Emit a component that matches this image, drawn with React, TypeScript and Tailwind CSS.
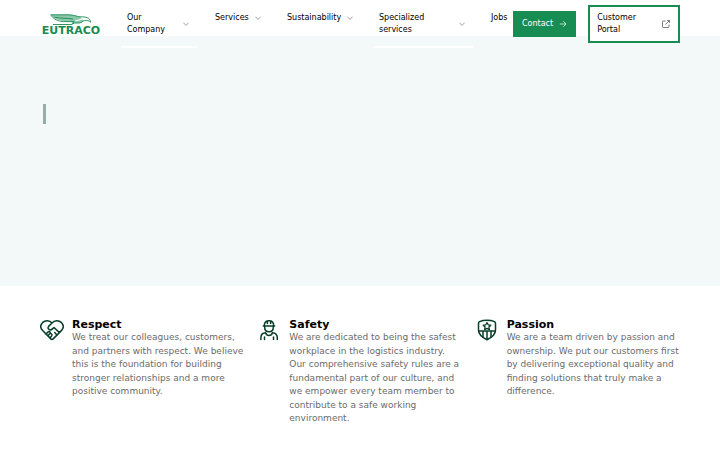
import React from "react";

type NavEntry = { label: string; width: string; menu: boolean };

const navEntries: NavEntry[] = [
  { label: "Our Company", width: "w-19", menu: true },
  { label: "Services", width: "w-15", menu: true },
  { label: "Sustainability", width: "w-20", menu: true },
  { label: "Specialized services", width: "w-25", menu: true },
  { label: "Jobs", width: "w-7", menu: false },
];

function Logo() {
  return (
    <svg viewBox="0 0 61 22" className="h-[22px] w-[61px]" role="img" aria-label="Eutraco">
      <path fill="#8cc7aa" d="M11 .8H29C34 .8 36 2.300 40 2.700L44 6.500L40 9H34L30 7.700C24 7.800 14 6 11 .8Z" />
      <g fill="none" stroke="#178c52" strokeWidth=".9" strokeLinejoin="round">
        <path d="M10.500.8H28C34 .8 36 2.400 40 2.800C46 2.700 50.300 3.600 50.600 8.200C49 6.400 47 6.500 44.500 6.600C42.500 7 41.500 9 39.500 9H34.500L31.500 10.500H13" />
        <path d="M11 1.200C13 4.800 18 8 27 7.600H34L31.500 10.500M14.500 3.200C21 4.500 27 4.100 33 5" />
      </g>
      <path d="M35.500 6.600C39 6.600 40.500 4.600 45 4.700" fill="none" stroke="#ffffff" strokeWidth="1.200" />
      <text x="31" y="20" textAnchor="middle" fontSize="11" fontWeight="700" fill="#178c52" fontFamily="'DejaVu Sans', sans-serif">
        EUTRACO
      </text>
    </svg>
  );
}

function Chevron() {
  return (
    <svg viewBox="0 0 6 6" className="size-1.5 shrink-0" fill="none" stroke="#777" strokeWidth=".7" aria-hidden="true">
      <path d="M.3 1.700 3 4.400 5.700 1.700" />
    </svg>
  );
}

function HandshakeHeart() {
  return (
    <svg viewBox="0 0 24 24" className="size-6" fill="none" stroke="#083d27" strokeWidth="1.500" strokeLinecap="round" strokeLinejoin="round" aria-hidden="true">
      <path d="M12 5C9.500 2 5.200 2 2.700 4.400C.3 6.900.3 10.200 2.600 12.600L10.800 20.900C11.500 21.600 12.500 21.600 13.200 20.900L21.400 12.600C23.700 10.200 23.700 6.900 21.300 4.400C18.800 2 14.500 2 12 5L8.600 8.400C7.800 9.300 7.900 10.500 8.700 11.200C9.900 12.200 11.500 11.900 12.500 10.900L14 9.500L19.400 14.600" />
      <path d="M14.700 14.600 16.700 16.700M6 16 8.200 13.900C9.400 12.900 10.800 14.300 9.900 15.500L8.400 17.200M10 15.500C11.500 15.300 12.500 16.700 11.600 17.900L10.500 19.200" />
    </svg>
  );
}

function Worker() {
  return (
    <svg viewBox="0 0 24 24" className="size-6" fill="none" stroke="#083d27" strokeWidth="1.500" strokeLinecap="round" strokeLinejoin="round" aria-hidden="true">
      <path d="M6.300 8H17.700M7.300 7.800C7.300 4.600 9.200 2.700 12 2.700S16.700 4.600 16.700 7.800M10.400 3.200V5.500M13.600 3.200V5.500" />
      <path d="M7.700 8.500V9.500C7.700 12 9.500 13.700 12 13.700S16.300 12 16.300 9.500V8.500" />
      <path d="M3.900 21.400V19.700C3.900 16.700 5.600 14.900 8.600 14.700C9.200 16.600 10.300 17.400 12 17.400S14.800 16.600 15.400 14.700C18.400 14.900 20.300 16.700 20.300 19.700V21.400M7.500 21.400V18.900M16.500 21.400V18.900" />
    </svg>
  );
}

function Shield() {
  return (
    <svg viewBox="0 0 24 24" className="size-6" fill="none" stroke="#083d27" strokeWidth="1.500" strokeLinecap="round" strokeLinejoin="round" aria-hidden="true">
      <path d="M12 2.200C9.500 2.200 6.500 2.700 4.500 3.600C3.800 4 3.500 4.500 3.500 5.200V12C3.500 16.500 7 19.300 12 21.700C17 19.300 20.500 16.500 20.500 12V5.200C20.500 4.500 20.200 4 19.500 3.600C17.500 2.700 14.500 2.200 12 2.200Z" />
      <path strokeWidth="1.300" d="m12 4.500 1.200 2.300 2.600.4-1.900 1.800.5 2.600L12 10.400 9.600 11.600l.5-2.600-1.900-1.800 2.600-.4Z" />
      <path d="M3.700 13H20.300M8 13V19M12 13V21.300M16 13V19" />
    </svg>
  );
}

const values = [
  {
    title: "Respect",
    icon: <HandshakeHeart />,
    text: "We treat our colleagues, customers, and partners with respect. We believe this is the foundation for building stronger relationships and a more positive community.",
  },
  {
    title: "Safety",
    icon: <Worker />,
    text: "We are dedicated to being the safest workplace in the logistics industry. Our comprehensive safety rules are a fundamental part of our culture, and we empower every team member to contribute to a safe working environment.",
  },
  {
    title: "Passion",
    icon: <Shield />,
    text: "We are a team driven by passion and ownership. We put our customers first by delivering exceptional quality and finding solutions that truly make a difference.",
  },
];

export default function App() {
  return (
    <div className="bg-white font-['DejaVu_Sans',sans-serif] text-black">
      <header className="flex h-9 items-start bg-white px-10 text-[8px] leading-3">
        <a href="#home" className="mt-3.5 shrink-0">
          <Logo />
        </a>
        <nav aria-label="Main" className="ml-5 flex items-start gap-3">
          {navEntries.map((entry) =>
            entry.menu ? (
              <button
                key={entry.label}
                type="button"
                className={`${entry.width} flex shrink-0 items-center justify-between gap-1.5 border-b-2 border-white pt-3 pr-2 pb-2.5 pl-1.5 text-left`}
              >
                <span className="min-w-0">{entry.label}</span>
                <Chevron />
              </button>
            ) : (
              <a key={entry.label} href="#jobs" className={`${entry.width} shrink-0 pt-3 pl-1.5`}>
                {entry.label}
              </a>
            ),
          )}
        </nav>
        <div className="mt-[5px] ml-auto flex shrink-0 items-center gap-3">
          <a href="#contact" className="flex h-[26px] items-center gap-1.5 bg-[#178d54] px-[9px] text-white">
            Contact
            <svg viewBox="0 0 8 8" className="size-2" fill="none" stroke="currentColor" strokeWidth=".7" aria-hidden="true">
              <path d="M.8 4H7M4.300 1.200 7.100 4 4.300 6.800" />
            </svg>
          </a>
          <a href="#portal" className="flex w-[92px] items-center justify-between border-2 border-[#178d54] bg-white py-[5px] pr-2 pl-[7px]">
            <span className="w-12">Customer Portal</span>
            <svg viewBox="0 0 8 8" className="size-2" fill="none" stroke="#444" strokeWidth=".7" aria-hidden="true">
              <path d="M3.500 1H1.300Q.5 1 .5 1.800V6.700Q.5 7.500 1.300 7.500H6.200Q7 7.500 7 6.700V4.500M5 .4H7.600V3M7.500.5 3.600 4.400" />
            </svg>
          </a>
        </div>
      </header>
      <main>
        <section aria-label="Introduction" className="h-[250px] bg-[#f3f9f9] px-[43px] pt-[68px]">
          <div className="h-5 w-[3px] bg-[#96adaa]" />
        </section>
        <section aria-label="Our values" className="grid grid-cols-3 gap-3 px-10 pt-8 pb-6">
          {values.map((value) => (
            <article key={value.title} className="flex items-start gap-2">
              <div className="shrink-0">{value.icon}</div>
              <div className="min-w-0">
                <h2 className="text-[11px] leading-[13px] font-bold">{value.title}</h2>
                <p className="text-[9px] leading-normal text-[#6b6b6b]">{value.text}</p>
              </div>
            </article>
          ))}
        </section>
      </main>
    </div>
  );
}
